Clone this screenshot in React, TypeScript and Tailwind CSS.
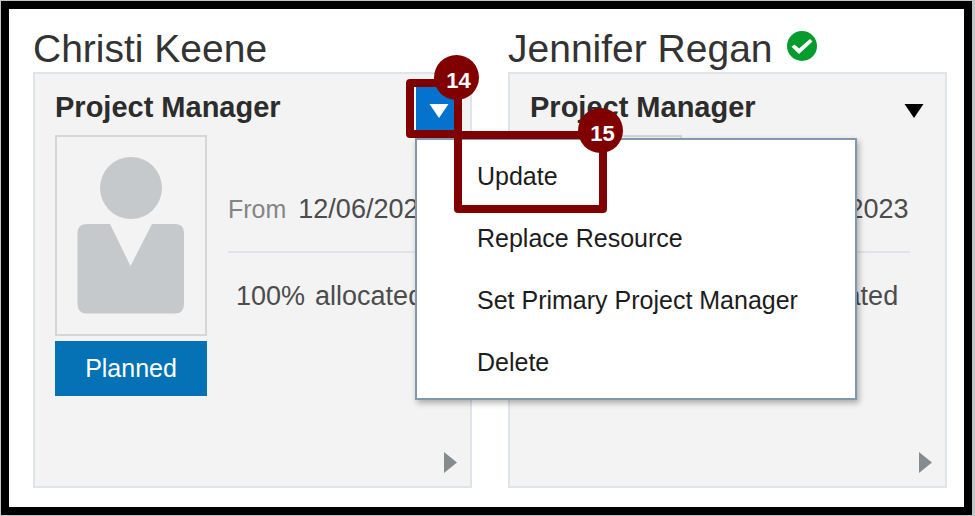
import { useState } from 'react';
import type { ReactNode } from 'react';

const menuItems = ['Update', 'Replace Resource', 'Set Primary Project Manager', 'Delete'];

const people = [
  { name: 'Christi Keene', primary: false },
  { name: 'Jennifer Regan', primary: true },
];

function StepBadge({ children, className }: { children: ReactNode; className: string }) {
  return (
    <span
      className={`absolute z-20 flex h-[45px] w-[45px] items-center justify-center rounded-full bg-[#800000] pl-1 pt-1.5 text-[22px] leading-6 font-bold text-white ${className}`}
    >
      {children}
    </span>
  );
}

function CheckBadge() {
  return (
    <svg viewBox="0 0 30 30" className="mt-[7px] h-[30px] w-[30px]" role="img" aria-label="Primary">
      <circle cx="15" cy="15" r="15" fill="#069b2d" />
      <path d="M4.500 15.800 L7.500 13.600 L12 17.400 L23 8 L25.500 10.400 L12 23 Z" fill="#fff" />
    </svg>
  );
}

function Avatar() {
  return (
    <div className="border-2 border-[#d6d6d6]">
      <svg viewBox="0 0 148 197" className="block w-full" aria-hidden="true">
        <circle cx="74" cy="51" r="31" fill="#c6c9cc" />
        <path
          d="M30 87 H53 L73.500 129 L95 87 H118 Q127 87 127 96 V167 Q127 176.500 118 176.500 H30 Q20.500 176.500 20.500 167 V96 Q20.500 87 30 87 Z"
          fill="#c6c9cc"
        />
      </svg>
    </div>
  );
}

function ActionMenu() {
  return (
    <ul
      role="menu"
      className="absolute left-px top-[51px] z-10 w-[442px] border-2 border-[#8298ae] bg-white py-[5px] shadow-[2px_3px_6px_rgba(0,0,0,0.3)]"
    >
      {menuItems.map((item, index) => (
        <li key={item} role="none" className="relative">
          <button
            role="menuitem"
            className="block w-full pl-[60px] text-left text-[25px] leading-[62px] whitespace-nowrap text-[#1c1c1c]"
          >
            {item}
          </button>
          {index === 0 && (
            <div className="pointer-events-none absolute -top-3.5 left-[37px] h-[82px] w-[153px] rounded-sm border-8 border-[#800000]">
              <StepBadge className="-top-[31px] -right-[24px]">15</StepBadge>
            </div>
          )}
        </li>
      ))}
    </ul>
  );
}

function ResourceCard({ name, primary, open, onToggle }: { name: string; primary: boolean; open: boolean; onToggle: () => void }) {
  return (
    <section>
      <div className="flex items-start gap-3.5">
        <h2 className="h-12 text-[39px] leading-[50px] whitespace-nowrap text-[#333]">{name}</h2>
        {primary && <CheckBadge />}
      </div>

      <div className="border-2 border-[#dfe4ea] bg-[#f3f3f3] pt-[13px] pb-[13px] pl-5">
        <div className="flex items-start justify-between pr-2">
          <h3 className="text-[29px] leading-10 font-bold whitespace-nowrap text-[#2c2c2c]">Project Manager</h3>
          <div className="relative">
            <button
              aria-label={`Actions for ${name}`}
              aria-expanded={open}
              onClick={onToggle}
              className={`flex h-[43px] w-12 items-center justify-center border-l-2 ${open ? 'border-white bg-[#0572ce] text-white' : 'border-transparent text-black'}`}
            >
              <svg viewBox="0 0 20 14" className="mt-1 h-3.5 w-5" fill="currentColor">
                <path d="M0.500 0 H19.500 L10 14 Z" />
              </svg>
            </button>
            {open && (
              <>
                <div className="pointer-events-none absolute -inset-y-2 right-0 -left-2 rounded-sm border-8 border-[#800000]">
                  <StepBadge className="-top-[32px] -right-[25px]">14</StepBadge>
                </div>
                <ActionMenu />
              </>
            )}
          </div>
        </div>

        <div className="mt-[5px] flex gap-[21px] pr-[35px]">
          <div className="w-[152px] shrink-0">
            <Avatar />
            <div className="mt-[5px] bg-[#0572b5] text-center text-[25px] leading-[55px] text-white">Planned</div>
          </div>
          <div className="flex-1 text-[27px] leading-8 whitespace-nowrap text-[#4c4c4c]">
            <div className="flex gap-3 border-b-2 border-[#dfe4ea] pt-[58px] pb-[26px]">
              <span className="text-[25px] text-[#858585]">From</span>
              <span>12/06/2023</span>
            </div>
            <div className="flex gap-2.5 pt-[27px] pl-2">
              <span>100%</span>
              <span>allocated</span>
            </div>
          </div>
        </div>

        <div className="mt-14 flex justify-end pr-[13px]">
          <button aria-label="Next">
            <svg viewBox="0 0 13 21" className="block h-[21px] w-[13px]">
              <path d="M0 0 L13 10.500 L0 21 Z" fill="#868b8f" />
            </svg>
          </button>
        </div>
      </div>
    </section>
  );
}

export default function App() {
  const [openName, setOpenName] = useState<string | null>('Christi Keene');

  return (
    <div className="bg-[#c3c6c6] pt-px pr-[3px] pb-px pl-px font-['Liberation_Sans',Arial,sans-serif]">
      <main className="grid grid-cols-2 gap-9 border-8 border-black bg-white pt-[15px] pr-[17px] pb-[19px] pl-6">
        {people.map((person) => (
          <ResourceCard
            key={person.name}
            name={person.name}
            primary={person.primary}
            open={openName === person.name}
            onToggle={() => setOpenName(openName === person.name ? null : person.name)}
          />
        ))}
      </main>
    </div>
  );
}
